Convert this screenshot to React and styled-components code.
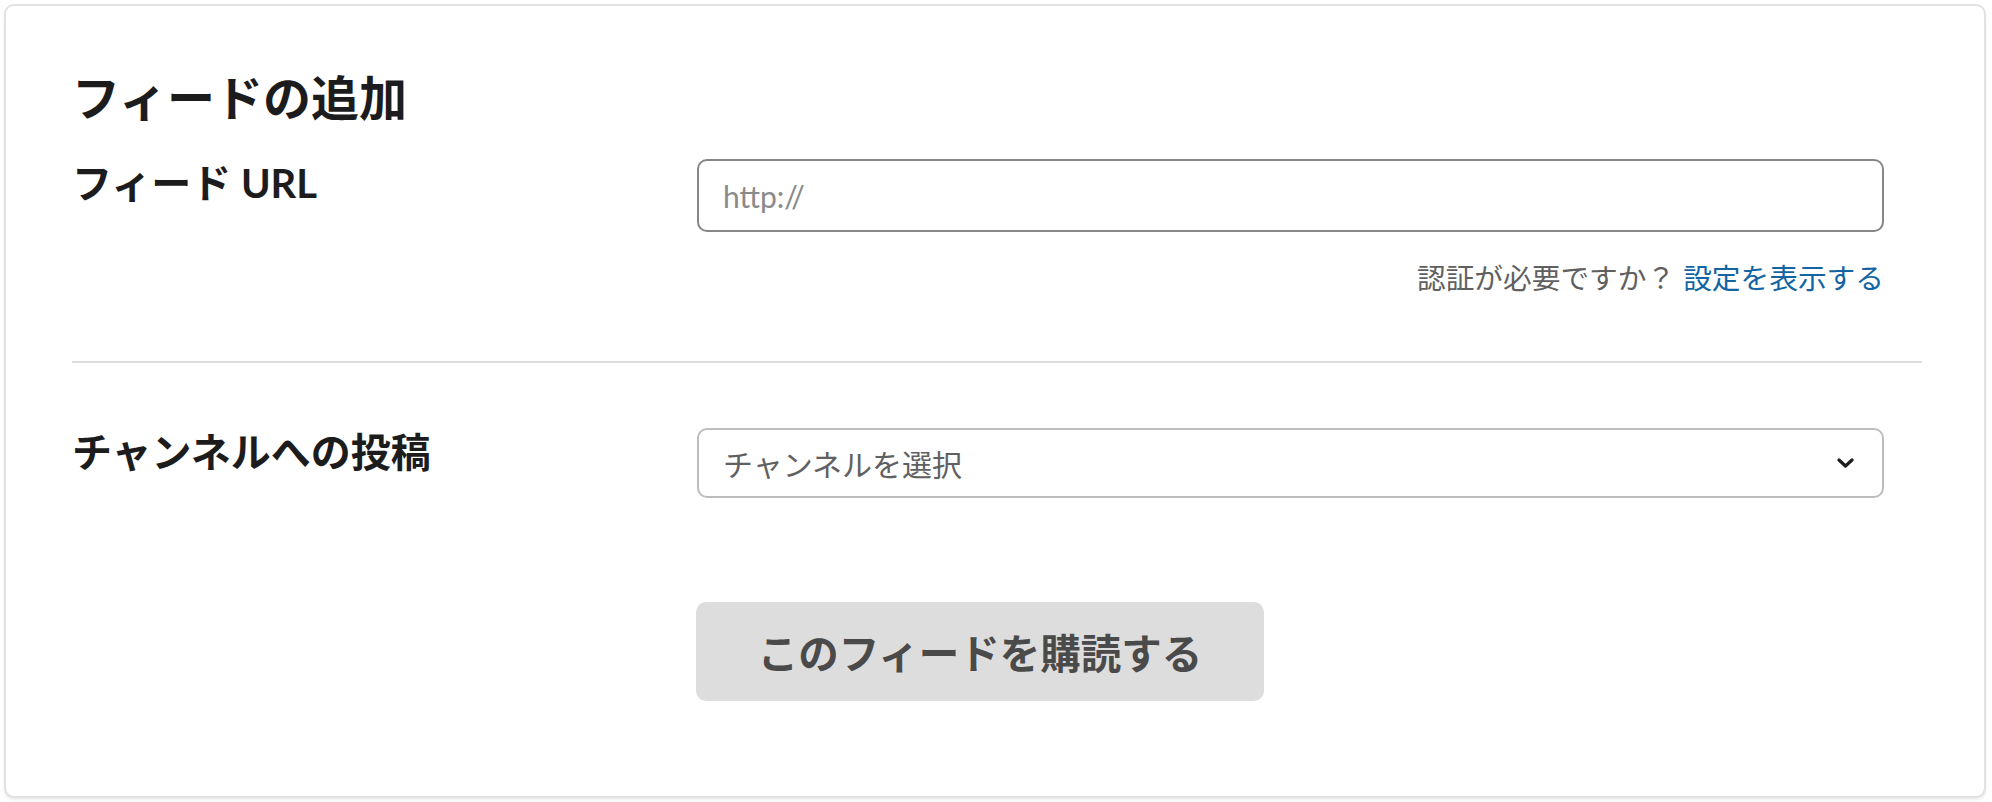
import { createGlobalStyle, styled } from "styled-components";

const GlobalStyle = createGlobalStyle`
  html, body {
    margin: 0;
    padding: 0;
    background: #ffffff;
  }
  body {
    font-family: Lato, "Noto Sans CJK JP", sans-serif;
    color: #1d1c1d;
  }
`;

const Page = styled.div`
  padding: 4px 6px 4px 4px;
`;

const Card = styled.div`
  height: 794px;
  box-sizing: border-box;
  border: 2px solid #e2e2e2;
  border-radius: 10px;
  box-shadow: 0 2px 3px rgba(0, 0, 0, 0.08);
  padding: 63px 62px 0 66px;
  background: #fff;
`;

const Title = styled.h1`
  margin: 0 0 32px;
  font-size: 48px;
  line-height: 58px;
  font-weight: 700;
  color: #1d1c1d;
`;

const Row = styled.div`
  display: grid;
  grid-template-columns: 625px 1fr;
  padding-right: 38px;
`;

const Label = styled.div`
  font-size: 40px;
  line-height: 48px;
  font-weight: 700;
  color: #1d1c1d;
`;

const Field = styled.div`
  display: flex;
  flex-direction: column;
`;

const Input = styled.input`
  height: 73px;
  box-sizing: border-box;
  border: 2px solid #868686;
  border-radius: 10px;
  padding: 0 24px;
  font-family: Lato, "Noto Sans CJK JP", sans-serif;
  font-size: 30px;
  color: #1d1c1d;
  outline: none;
  &::placeholder {
    color: #8a8a8a;
  }
`;

const Help = styled.div`
  margin-top: 28px;
  text-align: right;
  font-size: 28.7px;
  line-height: 36px;
  color: #616061;
`;

const Link = styled.a`
  color: #1264a3;
  text-decoration: none;
  margin-left: 8px;
`;

const Divider = styled.hr`
  margin: 65px 0 65px;
  border: none;
  height: 2px;
  background: #dddddd;
`;

const Select = styled.div`
  height: 70px;
  box-sizing: border-box;
  border: 2px solid #bdbdbd;
  border-radius: 10px;
  padding: 0 28px 0 24px;
  display: flex;
  align-items: center;
  justify-content: space-between;
  font-size: 30px;
  color: #616061;
`;

const Actions = styled.div`
  display: grid;
  grid-template-columns: 625px 1fr;
  margin-top: 104px;
`;

const Button = styled.button`
  grid-column: 2;
  width: 568px;
  height: 99px;
  margin-left: -1px;
  border: none;
  border-radius: 10px;
  background: #dddddd;
  color: #4a4a4a;
  font-family: Lato, "Noto Sans CJK JP", sans-serif;
  font-size: 40.5px;
  font-weight: 700;
`;

const Chevron = () => (
  <svg width="17" height="10" viewBox="0 0 17 10">
    <path d="M2 2l6.5 6 6.5-6" fill="none" stroke="#1d1c1d" strokeWidth="3.2" strokeLinecap="round" strokeLinejoin="round" />
  </svg>
);

export default function App() {
  return (
    <Page>
      <GlobalStyle />
      <Card>
        <Title>フィードの追加</Title>
        <Row>
          <Label>フィード URL</Label>
          <Field>
            <Input placeholder="http://" />
            <Help>
              認証が必要ですか？<Link href="#">設定を表示する</Link>
            </Help>
          </Field>
        </Row>
        <Divider />
        <Row>
          <Label>チャンネルへの投稿</Label>
          <Select>
            <span>チャンネルを選択</span>
            <Chevron />
          </Select>
        </Row>
        <Actions>
          <Button>このフィードを購読する</Button>
        </Actions>
      </Card>
    </Page>
  );
}
